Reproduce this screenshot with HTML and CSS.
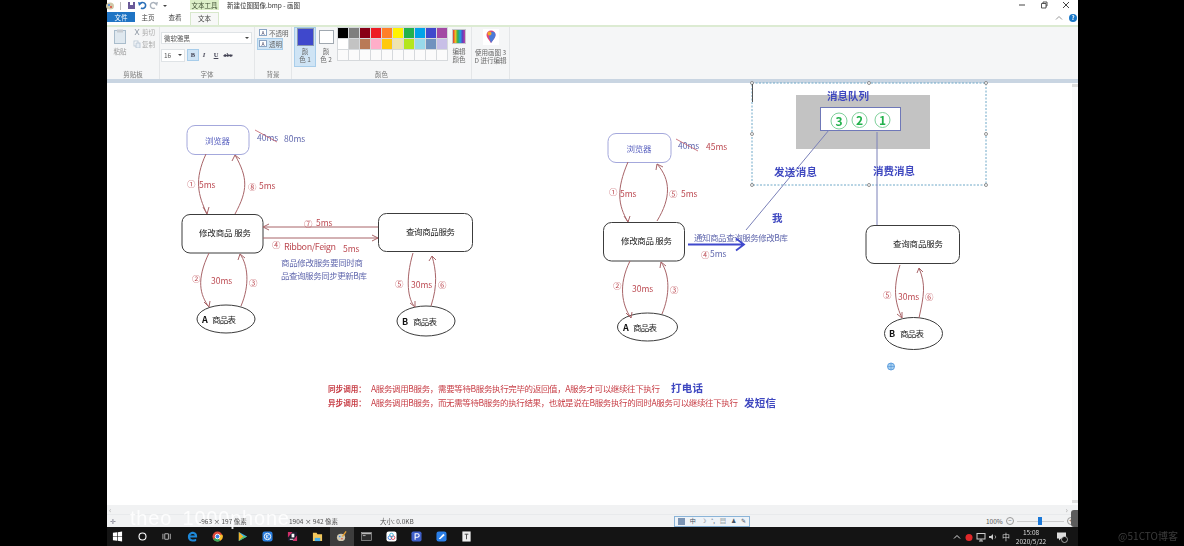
FILE: index.html
```html
<!DOCTYPE html>
<html lang="zh-CN">
<head>
<meta charset="utf-8">
<title>新建位图图像.bmp - 画图</title>
<link rel="stylesheet" href="styles.css">
</head>
<body>
<div class="screen">
  <main class="window">
    <header class="titlebar">
      <div class="quick">
        <svg class="qi qi-app" viewBox="0 0 9 9"><ellipse cx="4" cy="5" rx="4" ry="3.500" fill="#cfc8a8"/><circle cx="3" cy="4" r="1" fill="#3a80e8"/><circle cx="5" cy="6" r="1" fill="#e04a3a"/></svg>
        <i class="qsep"></i>
        <svg class="qi" viewBox="0 0 9 9"><rect x="1" y="1" width="7" height="7" fill="#6a5a98"/><rect x="3" y="1" width="3" height="3" fill="#fff"/></svg>
        <svg class="qi" viewBox="0 0 9 9"><path d="M2 3 a3 3 0 1 1 1 4" fill="none" stroke="#2a6fb8" stroke-width="1.600"/><path d="M0 1l4 1-3 3z" fill="#2a6fb8"/></svg>
        <svg class="qi" viewBox="0 0 9 9"><path d="M7 3 a3 3 0 1 0 -1 4" fill="none" stroke="#aab2bc" stroke-width="1.400"/><path d="M9 1l-4 1 3 3z" fill="#aab2bc"/></svg>
        <span class="qcaret"></span>
      </div>
      <div class="context-tab">文本工具</div>
      <div class="doc-title">新建位图图像.bmp - 画图</div>
      <div class="win-btns">
        <svg class="wb" viewBox="0 0 8 8"><path d="M1 4h6" stroke="#444" stroke-width="1"/></svg>
        <svg class="wb" viewBox="0 0 8 8"><path d="M1.500 2.500h4.500v4.500h-4.500zM3 2.500v-1.500h4v4h-1" fill="none" stroke="#444" stroke-width=".9"/></svg>
        <svg class="wb" viewBox="0 0 8 8"><path d="M1 1l6 6M7 1l-6 6" stroke="#444" stroke-width="1"/></svg>
      </div>
    </header>
    <nav class="tabs">
      <span class="tab tab-file">文件</span>
      <span class="tab tab-home">主页</span>
      <span class="tab tab-view">查看</span>
      <span class="tab tab-text">文本</span>
      <span class="tab-tools">
        <svg class="chev" viewBox="0 0 8 6"><path d="M1 4.500l3-3 3 3" fill="none" stroke="#999" stroke-width="1"/></svg>
        <span class="help">?</span>
      </span>
    </nav>
    <section class="ribbon">
      <div class="group g-clip">
        <div class="group-body clip-body">
          <div class="paste">
            <svg class="paste-icon" viewBox="0 0 12 15"><rect x=".5" y="1.500" width="11" height="13" fill="#dfe8ef" stroke="#a9bccb"/><rect x="3" y=".5" width="6" height="3" fill="#c7ccd2"/></svg>
            <span>粘贴</span>
          </div>
          <div class="clip-actions">
            <span class="mini"><svg class="mini-i" viewBox="0 0 8 8"><path d="M2 1l4 6M6 1l-4 6" stroke="#9aa3ad" stroke-width="1"/></svg>剪切</span>
            <span class="mini"><svg class="mini-i" viewBox="0 0 8 8"><rect x="1" y="1" width="4" height="5" fill="#fff" stroke="#b6c4d2" stroke-width=".8"/><rect x="3" y="3" width="4" height="5" fill="#e6edf4" stroke="#b6c4d2" stroke-width=".8"/></svg>复制</span>
          </div>
        </div>
        <div class="group-label">剪贴板</div>
      </div>
      <div class="group g-font">
        <div class="group-body font-body">
          <div class="select select-font"><span>微软雅黑</span><i class="caret"></i></div>
          <div class="font-row">
            <div class="select select-size"><span>16</span><i class="caret"></i></div>
            <span class="fbtn fbtn-on fb">B</span>
            <span class="fbtn fi">I</span>
            <span class="fbtn fu">U</span>
            <span class="fbtn fs">abc</span>
          </div>
        </div>
        <div class="group-label">字体</div>
      </div>
      <div class="group g-bg">
        <div class="group-body bg-body">
          <span class="bg-opt"><b class="bg-a">A</b>不透明</span>
          <span class="bg-opt bg-on"><b class="bg-a">A</b>透明</span>
        </div>
        <div class="group-label">背景</div>
      </div>
      <div class="group g-colors">
        <div class="group-body colors-body">
          <div class="color-btn color-on"><i class="swatch swatch-1"></i><span>颜<br>色 1</span></div>
          <div class="color-btn"><i class="swatch swatch-2"></i><span>颜<br>色 2</span></div>
          <div class="palette">
            <i class="c c1"></i><i class="c c2"></i><i class="c c3"></i><i class="c c4"></i><i class="c c5"></i><i class="c c6"></i><i class="c c7"></i><i class="c c8"></i><i class="c c9"></i><i class="c c10"></i>
            <i class="c c11"></i><i class="c c12"></i><i class="c c13"></i><i class="c c14"></i><i class="c c15"></i><i class="c c16"></i><i class="c c17"></i><i class="c c18"></i><i class="c c19"></i><i class="c c20"></i>
            <i class="c"></i><i class="c"></i><i class="c"></i><i class="c"></i><i class="c"></i><i class="c"></i><i class="c"></i><i class="c"></i><i class="c"></i><i class="c"></i>
          </div>
          <div class="edit-colors"><i class="rainbow"></i><span>编辑<br>颜色</span></div>
        </div>
        <div class="group-label">颜色</div>
      </div>
      <div class="group g-3d">
        <div class="group-body p3d-body">
          <svg class="p3d-icon" viewBox="0 0 16 16"><rect width="16" height="16" fill="#fff"/><path d="M8 14 C5 10 3.500 8 3.500 6 a4.500 4.500 0 0 1 9 0 C12.500 8 11 10 8 14z" fill="#e0457b"/><path d="M8 14 C6.500 10 6 8 6 6 a3 3 0 0 1 6.500 0 C12.500 8 11 10 8 14z" fill="#4a7ad8"/><circle cx="6.500" cy="4.500" r="2" fill="#f5a623"/></svg>
          <span>使用画图 3<br>D 进行编辑</span>
        </div>
      </div>
    </section>
    <div class="canvas-row">
      <svg class="canvas" viewBox="107 79 965 426" xmlns="http://www.w3.org/2000/svg">
        <!-- selection -->
        <rect class="sel" x="752" y="83" width="234" height="102"/>
        <g class="handle">
          <circle cx="752" cy="83" r="1.500"/><circle cx="869" cy="83" r="1.500"/><circle cx="986" cy="83" r="1.500"/>
          <circle cx="752" cy="134" r="1.500"/><circle cx="986" cy="134" r="1.500"/>
          <circle cx="752" cy="185" r="1.500"/><circle cx="869" cy="185" r="1.500"/><circle cx="986" cy="185" r="1.500"/>
        </g>
        <path class="caret-line" d="M752.500 84v18"/>
        <!-- queue -->
        <rect class="queue-bg" x="796" y="95" width="134" height="54"/>
        <rect class="queue" x="820.500" y="107.500" width="80" height="23"/>
        <text class="t-head" x="827" y="100" textLength="42">消息队列</text>
        <circle class="q-c" cx="839" cy="121" r="8"/><circle class="q-c" cx="859.500" cy="120" r="7.500"/><circle class="q-c" cx="882.500" cy="120" r="7.500"/>
        <text class="q-n" x="839" y="125.500">3</text><text class="q-n" x="859.500" y="124.500">2</text><text class="q-n" x="882.500" y="124.500">1</text>
        <path class="mq-line" d="M829 130L746 230M877 132V226"/>
        <text class="t-head" x="774" y="176" textLength="43">发送消息</text>
        <text class="t-head" x="873" y="175" textLength="42">消费消息</text>
        <text class="t-head" x="772" y="222">我</text>

        <!-- left diagram -->
        <rect class="n-browser" x="187" y="125.500" width="62" height="29" rx="8"/>
        <text class="t-browser" x="205" y="144" textLength="25">浏览器</text>
        <text class="t-blue" x="257" y="141">40ms</text><path class="strike" d="M255 130L277 142"/>
        <text class="t-blue" x="284" y="141.500">80ms</text>
        <rect class="node" x="182" y="214.500" width="81" height="38.500" rx="8"/>
        <text class="t-node" x="199" y="236" textLength="52">修改商品 服务</text>
        <rect class="node" x="378.500" y="213.500" width="94" height="38" rx="8"/>
        <text class="t-node" x="406" y="235" textLength="49">查询商品服务</text>
        <ellipse class="node" cx="226" cy="319" rx="29" ry="14"/>
        <text class="t-bold" x="202" y="323">A</text><text class="t-node" x="212" y="322.500" textLength="24">商品表</text>
        <ellipse class="node" cx="426" cy="321" rx="29" ry="15"/>
        <text class="t-bold" x="402" y="325">B</text><text class="t-node" x="413" y="324.500" textLength="24">商品表</text>
        <path class="flow" d="M206 154C194 180 198 195 207 214M203 207l4 7 2-7M235 214C248 190 248 178 235 155M232 161l3-6 5 4"/>
        <path class="flow" d="M209 253C196 280 200 295 209 307M204 302l5 5 1-6M241 306C250 285 248 265 240 254M238 260l2-6 5 4"/>
        <path class="flow" d="M378 227H263M269 224l-6 3 6 3M263 238H378M372 235l6 3-6 3"/>
        <path class="flow" d="M413 253C405 280 408 300 415 307M410 303l5 4 0-6"/><path class="flow" d="M431 306C438 285 436 270 432 256M429 261l3-5 4 4"/>
        <text class="t-red" x="187" y="186.500">①</text><text class="t-red" x="199" y="187.500">5ms</text>
        <text class="t-red" x="248" y="189.500">⑧</text><text class="t-red" x="259" y="188.500">5ms</text>
        <text class="t-red" x="304" y="227">⑦</text><text class="t-red" x="316" y="225.500">5ms</text>
        <text class="t-red" x="272" y="248">④</text><text class="t-red t-lg" x="284" y="249.500" textLength="52">Ribbon/Feign</text><text class="t-red" x="343" y="251.500">5ms</text>
        <text class="t-blue" x="281" y="266" textLength="82">商品修改服务要同时商</text>
        <text class="t-blue" x="281" y="279" textLength="86">品查询服务同步更新B库</text>
        <text class="t-red" x="192" y="281.500">②</text><text class="t-red" x="211" y="283.500">30ms</text><text class="t-red" x="249" y="285.500">③</text>
        <text class="t-red" x="395" y="286.500">⑤</text><text class="t-red" x="411" y="287.500">30ms</text><text class="t-red" x="438" y="287.500">⑥</text>

        <!-- right diagram -->
        <rect class="n-browser" x="608" y="133.500" width="63" height="29" rx="8"/>
        <text class="t-browser" x="626.500" y="151.500" textLength="25">浏览器</text>
        <text class="t-blue" x="678" y="149">40ms</text><path class="strike" d="M676 139L698 151"/>
        <text class="t-red" x="706" y="149.500">45ms</text>
        <rect class="node" x="603.500" y="222.500" width="81" height="38.500" rx="8"/>
        <text class="t-node" x="621" y="244" textLength="51">修改商品 服务</text>
        <rect class="node" x="866" y="225.500" width="93.500" height="38" rx="8"/>
        <text class="t-node" x="893" y="247" textLength="50">查询商品服务</text>
        <ellipse class="node" cx="647.500" cy="327" rx="30" ry="14"/>
        <text class="t-bold" x="623" y="331">A</text><text class="t-node" x="633" y="330.500" textLength="24">商品表</text>
        <ellipse class="node" cx="913.500" cy="333.500" rx="29" ry="16"/>
        <text class="t-bold" x="889" y="337">B</text><text class="t-node" x="900" y="336.500" textLength="24">商品表</text>
        <path class="flow" d="M628 162C616 190 618 205 628 222M624 216l4 6 2-6M657 221C671 198 671 180 657 164M656 170l1-6 6 3"/>
        <path class="flow" d="M630 261C618 285 622 305 631 318M626 313l5 5 1-6M662 314C670 295 670 275 661 262M660 268l1-6 5 4"/>
        <path class="flow" d="M900 265C892 290 896 305 902 318M897 314l5 4 0-6"/><path class="flow" d="M919 318C924 295 926 285 919 268M917 273l2-5 4 4"/>
        <text class="t-red" x="609" y="195">①</text><text class="t-red" x="620" y="196.500">5ms</text>
        <text class="t-red" x="669" y="196.500">⑤</text><text class="t-red" x="681" y="196.500">5ms</text>
        <text class="t-red" x="613" y="289">②</text><text class="t-red" x="632" y="291.500">30ms</text><text class="t-red" x="670" y="292.500">③</text>
        <text class="t-red" x="883" y="298">⑤</text><text class="t-red" x="898" y="299.500">30ms</text><text class="t-red" x="925" y="299.500">⑥</text>
        <text class="t-blue" x="694" y="241" textLength="94">通知商品查询服务修改B库</text>
        <path class="send" d="M688 244.500H744M736 238.500l8 6-8 6"/>
        <text class="t-red" x="701" y="257.500">④</text><text class="t-blue" x="710" y="257">5ms</text>

        <!-- notes -->
        <text class="t-note-b" x="328" y="392">同步调用：</text>
        <text class="t-note" x="371" y="392" textLength="289">A服务调用B服务，需要等待B服务执行完毕的返回值，A服务才可以继续往下执行</text>
        <text class="t-head" x="671" y="392" textLength="32">打电话</text>
        <text class="t-note-b" x="328" y="406">异步调用：</text>
        <text class="t-note" x="371" y="406" textLength="367">A服务调用B服务，而无需等待B服务的执行结果，也就是说在B服务执行的同时A服务可以继续往下执行</text>
        <text class="t-head" x="744" y="407" textLength="32">发短信</text>
        <circle class="globe" cx="891" cy="366.500" r="3.500"/><path class="globe-l" d="M887.500 366.500h7M891 363v7"/>
      </svg>
      <div class="vscroll"><i class="vs-up"></i><i class="vs-down"></i></div>
    </div>
    <div class="hscroll"><span>‹</span><span>›</span></div>
    <footer class="status">
      <span class="watermark">theo 1000phone</span>
      <span class="st st-move">✛</span>
      <span class="st st-sel">-963 × 197 像素</span>
      <span class="st st-size">1904 × 942 像素</span>
      <span class="st st-file">大小: 0.0KB</span>
      <span class="ime"><i class="ime-logo"></i><b>中</b><b>☽</b><b>°,</b><b>▤</b><b>♟</b><b>✎</b></span>
      <span class="zoom-pct">100%</span>
      <span class="zoom-btn">−</span>
      <span class="zoom-track"><i class="zoom-thumb"></i></span>
      <span class="zoom-btn">+</span>
      <i class="grip"></i>
    </footer>
    <div class="taskbar">
      <div class="task-icons">
        <span class="ti"><svg viewBox="0 0 12 12"><path d="M1 2l4.500-.6v4.200H1zM6.200 1.300L11 .6v5H6.200zM1 6.400h4.500v4.200L1 10zM6.200 6.400H11v5l-4.800-.7z" fill="#fff"/></svg></span>
        <span class="ti"><svg viewBox="0 0 12 12"><circle cx="6" cy="6" r="3.800" fill="none" stroke="#fff" stroke-width="1.200"/></svg></span>
        <span class="ti"><svg viewBox="0 0 12 12"><path d="M3 3h4v6H3zM9 3v6M1 3v6" fill="none" stroke="#bbb" stroke-width="1"/></svg></span>
        <span class="ti"><svg viewBox="0 0 12 12"><path d="M11 7H3.500c.3 2.500 4 3 6.500 1.500v2.300C6 12.500 1 11 1 6.500 1 2 5 .5 7.500 1 10 1.500 11.300 3.500 11 7zM8.500 5C8.500 2.800 4 2.800 3.700 5z" fill="#1e88d8"/></svg></span>
        <span class="ti"><svg viewBox="0 0 12 12"><circle cx="6" cy="6" r="5.500" fill="#e04a3a"/><path d="M6 6L1.200 9A5.500 5.500 0 0 0 9 10.600z" fill="#3aa757"/><path d="M6 6l3 4.600A5.500 5.500 0 0 0 11.400 4H6z" fill="#f6c02c"/><circle cx="6" cy="6" r="2.500" fill="#3a80e8" stroke="#fff"/></svg></span>
        <span class="ti"><svg viewBox="0 0 12 12"><path d="M2 1l9 5-9 5z" fill="#3bb4e8"/><path d="M2 1l5 5-5 5z" fill="#f0b429"/><path d="M7 6l4 0-9 5z" fill="#5ac05a"/></svg></span>
        <span class="ti"><svg viewBox="0 0 12 12"><rect x=".5" y=".5" width="11" height="11" rx="2.500" fill="#2a7fe0"/><circle cx="6" cy="6" r="3.500" fill="none" stroke="#fff"/><path d="M5 4v4M7.500 4L5 6l2.500 2" fill="none" stroke="#fff" stroke-width=".8"/></svg></span>
        <span class="ti"><svg viewBox="0 0 12 12"><path d="M1 1h10v10H1z" fill="#1b1b2b"/><path d="M1 1l5 0-5 6zM11 11l-5 0 5-6z" fill="#d0306a"/><rect x="3" y="8.500" width="4" height="1" fill="#fff"/><rect x="5" y="3" width="3" height="4" fill="#fff"/></svg></span>
        <span class="ti"><svg viewBox="0 0 12 12"><path d="M1 2h4l1 1.500h5V11H1z" fill="#f2c75c"/><rect x="3" y="7.500" width="6" height="3.500" fill="#4ab0e8"/></svg></span>
        <span class="ti ti-active"><svg viewBox="0 0 12 12"><ellipse cx="5.500" cy="7" rx="4.500" ry="4" fill="#cfc8b0"/><circle cx="4" cy="6" r=".9" fill="#3a80e8"/><circle cx="6.500" cy="8.500" r=".9" fill="#e04a3a"/><path d="M7 6l4-5.500" stroke="#e8a030" stroke-width="1.400"/></svg></span>
        <span class="ti"><svg viewBox="0 0 12 12"><rect x=".5" y="1.500" width="11" height="9" fill="#2b2b2b" stroke="#aaa" stroke-width=".7"/><rect x="1" y="2" width="10" height="1.500" fill="#bbb"/><path d="M2 5h3" stroke="#ddd" stroke-width=".8"/></svg></span>
        <span class="ti"><svg viewBox="0 0 12 12"><rect x=".5" y=".5" width="11" height="11" rx="2.500" fill="#fff"/><circle cx="4.300" cy="7.300" r="2" fill="none" stroke="#3a80e8"/><circle cx="7.700" cy="7.300" r="2" fill="none" stroke="#e04a5a"/><circle cx="6" cy="4.500" r="2" fill="none" stroke="#3ab0d8"/></svg></span>
        <span class="ti"><svg viewBox="0 0 12 12"><rect x=".5" y=".5" width="11" height="11" rx="2" fill="#3f5fc8"/><path d="M4.500 9.500V3h2.500a1.800 1.800 0 0 1 0 3.800H4.500" fill="none" stroke="#fff" stroke-width="1.200"/></svg></span>
        <span class="ti"><svg viewBox="0 0 12 12"><rect x=".5" y=".5" width="11" height="11" rx="2.500" fill="#2a7fe8"/><path d="M3 8.500L8 3l1.500 1.500L4.500 9z" fill="#fff"/></svg></span>
        <span class="ti"><svg viewBox="0 0 12 12"><rect x="1.500" y=".5" width="9" height="11" fill="#eee"/><path d="M4 3.500h4M6 3.500V9" stroke="#444" stroke-width="1"/></svg></span>
      </div>
      <div class="tray">
        <svg class="tray-i" viewBox="0 0 10 10"><path d="M2 6.500l3-3 3 3" fill="none" stroke="#ddd" stroke-width="1"/></svg>
        <svg class="tray-i" viewBox="0 0 10 10"><circle cx="5" cy="5.500" r="3.500" fill="#e0282a"/></svg>
        <svg class="tray-i" viewBox="0 0 10 10"><rect x="1" y="1.500" width="8" height="5.500" fill="none" stroke="#ccc"/><path d="M5 7v2M3 9h4" stroke="#ccc"/></svg>
        <svg class="tray-i" viewBox="0 0 10 10"><path d="M1 4h2l2-2v6L3 6H1z" fill="#ccc"/><path d="M7 3.500a2 2 0 0 1 0 3" fill="none" stroke="#ccc" stroke-width=".7"/></svg>
        <span class="tray-ime">中</span>
        <span class="clock">15:08<br>2020/5/22</span>
        <svg class="notify" viewBox="0 0 12 12"><path d="M1 1.500h9v6H5L3 9.500v-2H1z" fill="#ddd"/><circle cx="8.500" cy="8.500" r="3" fill="#111" stroke="#ddd" stroke-width=".7"/></svg>
      </div>
    </div>
  </main>
  <aside class="right-side"><span class="cto">@51CTO博客</span></aside>
</div>
</body>
</html>
```
FILE: styles.css
```css
* { box-sizing: border-box; }
html, body { margin: 0; height: 100%; background: #000; overflow: hidden; }
body { font-family: "Noto Sans CJK SC", "Liberation Sans", sans-serif; color: #555; }
.screen { display: flex; width: 1184px; height: 546px; padding-left: 107px; filter: blur(.5px); }
.window { width: 971px; height: 546px; display: flex; flex-direction: column; background: #fff; position: relative; }
.right-side { flex: 1; display: flex; align-items: flex-end; justify-content: flex-end; padding: 0 6px 3px 0; }
.cto { font-size: 10px; line-height: 14px; color: #3c3c3c; }

/* title */
.titlebar { height: 12px; display: flex; align-items: flex-start; font-size: 6.500px; line-height: 10px; }
.quick { width: 83px; display: flex; align-items: center; gap: 2px; padding-top: 1px; }
.qi { width: 9px; height: 9px; flex: none; }
.qi-app { margin-left: -1px; }
.qsep { width: 1px; height: 8px; background: #bbb; margin: 0 4px 0 3px; display: block; }
.qcaret { width: 0; height: 0; margin-left: 3px; border: 2px solid transparent; border-top: 2.500px solid #444; border-bottom: 0; }
.context-tab { width: 29px; height: 10px; background: #dcefc8; text-align: center; color: #3c4c30; }
.doc-title { margin-left: 8px; color: #333; }
.win-btns { margin-left: auto; display: flex; gap: 14px; padding: 1px 8px 0 0; }
.wb { width: 8px; height: 8px; }

/* tabs */
.tabs { height: 13px; display: flex; align-items: stretch; font-size: 6.500px; line-height: 11px; position: relative; }
.tab { text-align: center; color: #444; }
.tab-file { width: 28px; height: 10px; background: #1f74c4; color: #fff; line-height: 10px; }
.tab-home { width: 26px; }
.tab-view { width: 28px; margin-right: 1px; }
.tab-text { width: 29px; height: 13px; background: #f7f8f7; border: 1px solid #d8e8cc; border-bottom: 0; }
.tab-tools { margin-left: auto; display: flex; align-items: center; gap: 6px; padding-right: 1px; }
.chev { width: 8px; height: 6px; }
.help { width: 8px; height: 8px; border-radius: 50%; background: #1a78c8; color: #fff; font-size: 6px; line-height: 8px; text-align: center; font-weight: 700; }

/* ribbon */
.ribbon { height: 55px; display: flex; background: #f5f6f7; border-top: 2px solid #dcebd2; font-size: 6.500px; line-height: 8px; }
.group { display: flex; flex-direction: column; border-right: 1px solid #e4e6e8; }
.group-body { height: 43px; }
.group-label { height: 9px; line-height: 9px; text-align: center; color: #777; }
.g-clip { width: 53px; }
.g-font { width: 95px; }
.g-bg { width: 37px; }
.g-colors { width: 180px; }
.g-3d { width: 38px; }
.clip-body { display: flex; padding-left: 7px; gap: 7px; }
.paste { width: 12px; margin-top: 2px; display: flex; flex-direction: column; align-items: center; gap: 3px; color: #999; }
.paste-icon { width: 12px; height: 15px; flex: none; }
.paste span { white-space: nowrap; }
.clip-actions { display: flex; flex-direction: column; gap: 3px; padding-top: 1px; color: #aaa; }
.mini { display: flex; align-items: center; gap: 1px; height: 9px; white-space: nowrap; }
.mini-i { width: 8px; height: 8px; }
.font-body { display: flex; flex-direction: column; gap: 5px; padding: 5px 0 0 1px; }
.select { height: 12px; background: #fff; border: 1px solid #dfe3e6; display: flex; align-items: center; justify-content: space-between; padding: 0 2px; color: #555; }
.select-font { width: 91px; }
.select-size { width: 24px; height: 13px; }
.caret { width: 0; height: 0; border: 2px solid transparent; border-top: 2.500px solid #444; border-bottom: 0; }
.font-row { display: flex; align-items: center; }
.fbtn { width: 12px; height: 12px; text-align: center; line-height: 12px; font-family: "Liberation Serif", serif; font-weight: 700; color: #445; }
.fbtn-on { background: #cfe4f5; border: 1px solid #a8cdea; line-height: 10px; margin: 0 -1px 0 2px; }
.fi { font-style: italic; }
.fu { text-decoration: underline; }
.fs { text-decoration: line-through; font-size: 6px; }
.bg-body { display: flex; flex-direction: column; padding: 1px 0 0 2px; }
.bg-opt { display: flex; align-items: center; gap: 2px; height: 10px; width: 33px; color: #666; padding-left: 2px; }
.bg-on { width: 26px; height: 12px; background: #cfe4f5; border: 1px solid #a8cdea; padding-left: 1px; }
.bg-a { width: 8px; height: 7px; border: 1px solid #8aa4c4; background: #fff; font-size: 5px; line-height: 5px; text-align: center; color: #446; flex: none; font-weight: 400; }
.colors-body { display: flex; padding-left: 2px; }
.color-btn { width: 20px; height: 40px; display: flex; flex-direction: column; align-items: center; gap: 2px; padding-top: 3px; text-align: center; color: #666; }
.color-on { width: 22px; background: #cfe4f5; border: 1px solid #a8cdea; padding-top: 1px; }
.swatch { display: block; flex: none; }
.swatch-1 { width: 15px; height: 16px; background: #3f48cc; outline: 1px solid #8a98b0; }
.swatch-2 { width: 13px; height: 12px; background: #fff; outline: 1px solid #a0a8b0; margin: 1px 0 2px; }
.palette { display: grid; grid-template-columns: repeat(10, 10px); grid-auto-rows: 10px; gap: 1px; margin: 1px 0 0 2px; align-content: start; }
.c { background: #fbfbfb; outline: 1px solid #d6d9dc; display: block; }
.c1 { background: #000; } .c2 { background: #7f7f7f; } .c3 { background: #880015; } .c4 { background: #ed1c24; } .c5 { background: #ff7f27; }
.c6 { background: #fff200; } .c7 { background: #22b14c; } .c8 { background: #00a2e8; } .c9 { background: #3f48cc; } .c10 { background: #a349a4; }
.c11 { background: #fff; } .c12 { background: #c3c3c3; } .c13 { background: #b97a57; } .c14 { background: #ffaec9; } .c15 { background: #ffc90e; }
.c16 { background: #efe4b0; } .c17 { background: #b5e61d; } .c18 { background: #99d9ea; } .c19 { background: #7092be; } .c20 { background: #c8bfe7; }
.edit-colors { margin-left: 5px; display: flex; flex-direction: column; align-items: center; gap: 3px; padding-top: 2px; color: #666; text-align: center; }
.rainbow { width: 14px; height: 15px; display: block; border: 1px solid #c4c8cc; background: linear-gradient(90deg, #e0303a, #f0c020, #30b050, #20a0e0, #6040c0, #c040a0); }
.p3d-body { display: flex; flex-direction: column; align-items: center; gap: 3px; padding-top: 2px; text-align: center; color: #666; white-space: nowrap; }
.p3d-icon { width: 16px; height: 16px; flex: none; }

/* canvas */
.canvas-row { height: 426px; display: flex; background: linear-gradient(#c9d5e2 0, #c9d5e2 4px, #fff 4px); }
.canvas { width: 965px; height: 426px; display: block; flex: none; }
.vscroll { flex: 1; display: flex; flex-direction: column; justify-content: space-between; padding: 5px 0 2px; background: linear-gradient(#c9d5e2 0, #c9d5e2 4px, #fafbfc 4px); }
.vs-up, .vs-down { width: 6px; height: 3px; background: #ddd; display: block; }
.hscroll { height: 9px; display: flex; justify-content: space-between; align-items: center; padding: 0 10px 0 2px; background: #f1f2f3; font-size: 8px; line-height: 9px; color: #aaa; }

/* svg text */
.canvas text { font-family: "Noto Sans CJK SC", "Liberation Sans", sans-serif; }
.sel { fill: none; stroke: #6fa8c8; stroke-width: 1; stroke-dasharray: 2 1.500; }
.handle circle { fill: #fff; stroke: #777; stroke-width: .8; }
.caret-line { stroke: #555; stroke-width: 1; }
.queue-bg { fill: #c3c3c3; }
.queue { fill: #fff; stroke: #6f78b8; stroke-width: 1; }
.t-head { font-size: 10.500px; font-weight: 700; fill: #3f48c0; }
.q-c { fill: #fff; stroke: #7ed09a; stroke-width: 1; }
.q-n { font-size: 12px; font-weight: 700; fill: #22b14c; text-anchor: middle; }
.mq-line { stroke: #7a80b8; stroke-width: 1; fill: none; }
.n-browser { fill: #fff; stroke: #a4a8dc; stroke-width: 1; }
.t-browser { font-size: 8.500px; fill: #5a62c0; }
.t-blue { font-size: 8.500px; fill: #6269ae; }
.t-red { font-size: 8.500px; fill: #bc4a52; }
.t-lg { font-size: 9px; }
.strike { stroke: #c05a66; stroke-width: .8; fill: none; }
.node { fill: #fff; stroke: #3c3c3c; stroke-width: 1; }
.t-node { font-size: 8.500px; fill: #222; }
.t-bold { font-size: 9px; font-weight: 700; fill: #111; font-family: "Liberation Sans", sans-serif; }
.flow { fill: none; stroke: #a86468; stroke-width: 1; }
.send { fill: none; stroke: #3f48cc; stroke-width: 1.800; }
.t-note { font-size: 8.500px; fill: #c84048; }
.t-note-b { font-size: 7.600px; font-weight: 700; fill: #c84048; }
.globe { fill: #a8d0f0; stroke: #4a90d8; stroke-width: .8; }
.globe-l { stroke: #4a90d8; stroke-width: .6; fill: none; }

/* status */
.status { height: 13px; display: flex; align-items: center; background: #f1f2f3; border-top: 1px solid #e8eaec; font-size: 6.500px; line-height: 12px; color: #555; position: relative; }
.st { white-space: nowrap; position: relative; }
.st-move { width: 92px; padding-left: 3px; color: #778; }
.st-sel { width: 90px; }
.st-size { width: 91px; }
.st-file { width: 294px; }
.ime { width: 76px; height: 11px; display: flex; align-items: center; justify-content: space-around; border: 1px solid #8ab4d8; background: #eef3f8; color: #456; }
.ime b { font-weight: 400; font-size: 6px; }
.ime-logo { width: 7px; height: 7px; background: #7a94b4; display: block; }
.zoom-pct { margin-left: 236px; width: 20px; }
.zoom-btn { width: 8px; height: 8px; border: 1px solid #999; border-radius: 50%; line-height: 5px; text-align: center; font-size: 6px; margin-right: 3px; }
.zoom-track { width: 47px; height: 1px; background: #ccc; margin-right: 3px; display: flex; align-items: center; padding-left: 21px; }
.zoom-thumb { width: 4px; height: 8px; background: #1a78d8; display: block; flex: none; }
.grip { position: absolute; right: 0; bottom: 0; width: 7px; height: 17px; background: #5c5c5c; border-radius: 3px 0 0 3px; }
.watermark { position: absolute; left: 23px; top: -5px; font-family: "Liberation Sans", sans-serif; font-size: 20px; line-height: 17px; letter-spacing: .8px; word-spacing: 4px; color: rgba(255, 255, 255, .85); white-space: nowrap; }

/* taskbar */
.taskbar { height: 19px; background: #141414; display: flex; justify-content: space-between; color: #ddd; }
.task-icons { display: flex; margin-left: -1.500px; }
.ti { width: 24.900px; height: 19px; display: flex; align-items: center; justify-content: center; }
.ti svg { width: 11px; height: 11px; }
.ti-active { background: #3d3d3d; }
.tray { display: flex; align-items: center; gap: 2px; padding-right: 10px; }
.tray-i { width: 10px; height: 10px; }
.tray-ime { font-size: 8px; width: 12px; text-align: center; }
.clock { width: 34px; font-size: 6.500px; line-height: 9px; text-align: center; }
.notify { width: 12px; height: 12px; margin-left: 6px; }
```
